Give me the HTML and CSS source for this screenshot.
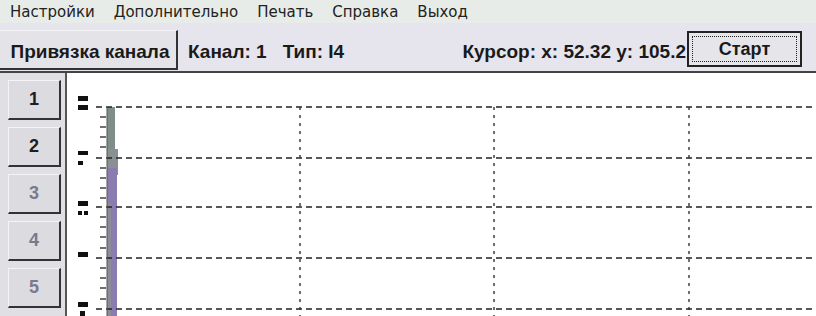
FILE: index.html
```html
<!DOCTYPE html>
<html lang="ru">
<head>
<meta charset="utf-8">
<link rel="stylesheet" href="styles.css">
</head>
<body>
<div class="app">
  <div class="menubar">
    <span class="menu-item">Настройки</span>
    <span class="menu-item">Дополнительно</span>
    <span class="menu-item">Печать</span>
    <span class="menu-item">Справка</span>
    <span class="menu-item">Выход</span>
  </div>
  <div class="toolbar">
    <div class="btn bind-btn">Привязка канала</div>
    <div class="info"><span>Канал: 1</span><span>Тип: I4</span></div>
    <div class="cursor">Курсор: x: 52.32 y: 105.2</div>
    <div class="btn start-btn"><span class="focus">Старт</span></div>
    <div class="edge"></div>
  </div>
  <div class="main">
    <div class="side">
      <div class="btn ch-btn">1</div>
      <div class="btn ch-btn">2</div>
      <div class="btn ch-btn dim">3</div>
      <div class="btn ch-btn dim">4</div>
      <div class="btn ch-btn dim">5</div>
    </div>
    <div class="plot">
      <svg class="chart" width="749" height="243" viewBox="0 0 749 243">
        <g class="labels" fill="#111">
          <rect x="11" y="23" width="10" height="5"/>
          <rect x="11" y="32" width="10" height="5"/>
          <rect x="11" y="78" width="10" height="4"/>
          <rect x="11" y="88" width="5" height="4"/>
          <rect x="11" y="128" width="10" height="5"/>
          <rect x="11" y="138" width="4" height="4"/>
          <rect x="17" y="138" width="4" height="4"/>
          <rect x="11" y="179" width="10" height="5"/>
          <rect x="11" y="229" width="10" height="5"/>
          <rect x="13" y="238" width="5" height="5"/>
        </g>
        <rect x="40" y="34" width="8" height="50" fill="#7f8e88"/>
        <rect x="40" y="76" width="11" height="26" fill="#8a8f92"/>
        <rect x="40" y="95" width="10" height="148" fill="#8a7cb0"/>
        <rect x="40" y="130" width="4" height="113" fill="#8b9192" opacity="0.7"/>
        <g class="grid-h" stroke="#222" stroke-width="1.6" stroke-dasharray="6 4">
          <line x1="29" y1="34" x2="749" y2="34"/>
          <line x1="29" y1="85" x2="749" y2="85"/>
          <line x1="29" y1="134" x2="749" y2="134"/>
          <line x1="29" y1="185" x2="749" y2="185"/>
          <line x1="29" y1="236" x2="749" y2="236"/>
        </g>
        <g class="grid-v" stroke="#333" stroke-width="1.4" stroke-dasharray="3 5">
          <line x1="233" y1="34" x2="233" y2="243"/>
          <line x1="427" y1="34" x2="427" y2="243"/>
          <line x1="622" y1="34" x2="622" y2="243"/>
        </g>
        <g class="ticks" stroke="#222" stroke-width="1.3">
          <line x1="33" y1="44" x2="39" y2="44"/>
          <line x1="33" y1="54" x2="39" y2="54"/>
          <line x1="33" y1="64" x2="39" y2="64"/>
          <line x1="33" y1="74" x2="39" y2="74"/>
          <line x1="33" y1="95" x2="39" y2="95"/>
          <line x1="33" y1="105" x2="39" y2="105"/>
          <line x1="33" y1="115" x2="39" y2="115"/>
          <line x1="33" y1="125" x2="39" y2="125"/>
          <line x1="33" y1="144" x2="39" y2="144"/>
          <line x1="33" y1="154" x2="39" y2="154"/>
          <line x1="33" y1="164" x2="39" y2="164"/>
          <line x1="33" y1="175" x2="39" y2="175"/>
          <line x1="33" y1="195" x2="39" y2="195"/>
          <line x1="33" y1="205" x2="39" y2="205"/>
          <line x1="33" y1="215" x2="39" y2="215"/>
          <line x1="33" y1="226" x2="39" y2="226"/>
        </g>
        <line x1="40" y1="34" x2="40" y2="243" stroke="#555" stroke-width="1"/>
      </svg>
    </div>
  </div>
</div>
</body>
</html>
```
FILE: styles.css
```css
* { box-sizing: border-box; }
html, body { margin: 0; padding: 0; }
body {
  width: 816px;
  height: 316px;
  overflow: hidden;
  background: #e6e6ea;
  font-family: "DejaVu Sans", sans-serif;
  color: #1a1a1a;
}
.app { display: flex; flex-direction: column; height: 316px; }
.menubar {
  height: 23px;
  display: flex;
  align-items: center;
  gap: 19px;
  padding-left: 10px;
  font-family: "DejaVu Sans", sans-serif;
  font-size: 15px;
  color: #222;
  background: #e8ece8;
}
.toolbar {
  height: 50px;
  display: flex;
  align-items: flex-start;
  background: #e6e4ec;
  border-bottom: 2px solid #444;
}
.btn {
  background: #dcdce0;
  border-top: 1px solid #f4f4f6;
  border-left: 1px solid #f4f4f6;
  border-right: 2px solid #333;
  border-bottom: 2px solid #333;
  display: flex;
  align-items: center;
  justify-content: center;
  font-weight: bold;
}
.bind-btn {
  margin-top: 7px;
  width: 178px;
  height: 40px;
  font-size: 19px;
  font-family: "Liberation Sans", sans-serif;
  padding-left: 4px;
  padding-top: 5px;
  border-left: none;
  background: #e4e4e8;
}
.info, .cursor {
  font-family: "Liberation Sans", sans-serif;
  font-weight: bold;
  font-size: 19px;
  margin-top: 18px;
  display: flex;
  gap: 16px;
}
.info { margin-left: 10px; }
.cursor { margin-left: auto; }
.start-btn {
  margin-top: 8px;
  margin-left: 1px;
  width: 115px;
  height: 36px;
  border: 2px solid #222;
  padding: 3px;
  font-size: 18px;
  font-family: "Liberation Sans", sans-serif;
  background: #e6e6ea;
}
.start-btn .focus {
  flex: 1;
  align-self: stretch;
  display: flex;
  align-items: center;
  justify-content: center;
  border: 1px dotted #222;
}
.edge { width: 14px; }
.main { flex: 1; display: flex; }
.side {
  width: 67px;
  display: flex;
  flex-direction: column;
  gap: 7px;
  padding: 7px 0 0 8px;
  border-right: 2px solid #555;
  background: #dfdfe4;
}
.ch-btn {
  width: 53px;
  height: 40px;
  flex: none;
  font-size: 18px;
  font-family: "Liberation Sans", sans-serif;
  color: #1c1c2a;
}
.ch-btn.dim { color: #7a7a8c; }
.plot { flex: 1; background: #fff; }
.chart { display: block; }
```
